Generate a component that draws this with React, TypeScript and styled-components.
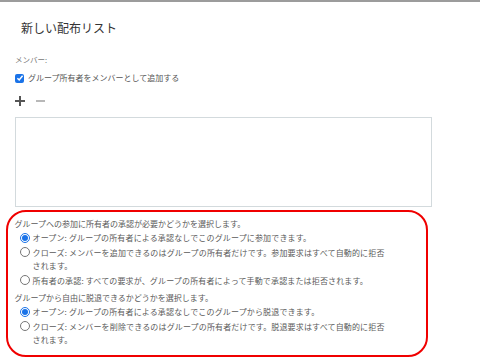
import React from "react";
import styled, { createGlobalStyle } from "styled-components";

const GlobalStyle = createGlobalStyle`
  html, body {
    margin: 0;
    padding: 0;
    background: #ffffff;
  }
  body {
    font-family: "Noto Sans CJK JP", "Noto Sans", sans-serif;
    color: #555;
  }
`;

const Page = styled.div`
  width: 480px;
  height: 363px;
  box-sizing: border-box;
  border-top: 2px solid #9c9c9c;
  padding: 0 6px;
  overflow: hidden;
`;

const Title = styled.h1`
  margin: 18px 0 0 15px;
  font-size: 12px;
  line-height: 16px;
  font-weight: 400;
  color: #333;
`;

const Body = styled.div`
  padding-left: 9px;
`;

const FieldLabel = styled.div`
  margin-top: 19px;
  font-size: 7.5px;
  line-height: 10px;
  color: #777;
`;

const CheckRow = styled.label`
  margin-top: 8px;
  display: flex;
  align-items: center;
  gap: 4px;
  font-size: 8px;
  line-height: 10px;
  color: #555;
`;

const CheckBox = styled.span`
  width: 9px;
  height: 9px;
  border-radius: 2px;
  background: #1a73e8;
  display: flex;
  align-items: center;
  justify-content: center;
`;

const Tools = styled.div`
  margin-top: 13px;
  display: flex;
  align-items: center;
  gap: 11px;
  height: 10px;
`;

const ToolButton = styled.span<{ $muted?: boolean }>`
  display: flex;
  color: ${(p) => (p.$muted ? "#b0b0b0" : "#555")};
`;

const MemberBox = styled.div`
  margin-top: 11px;
  width: 417px;
  height: 90px;
  box-sizing: border-box;
  border: 1px solid #d3dadd;
  background: #fff;
`;

const Panel = styled.section`
  margin-top: 3px;
  width: 422px;
  height: 147px;
  box-sizing: border-box;
  border: 2.5px solid #f00000;
  border-radius: 20px;
  padding: 5px 0 0 6.5px;
`;

const Question = styled.div<{ $first?: boolean }>`
  margin-top: ${(p) => (p.$first ? "0" : "4px")};
  margin-bottom: 1px;
  font-size: 8px;
  line-height: 13px;
  color: #5a5a5a;
`;

const Option = styled.label`
  margin-top: 1px;
  display: flex;
  align-items: flex-start;
  gap: 3px;
  padding-left: 5px;
  width: 371px;
  font-size: 8px;
  line-height: 13.5px;
  letter-spacing: 0.15px;
  color: #5a5a5a;
`;

const Radio = styled.span<{ $checked?: boolean }>`
  flex: none;
  margin-top: 1.5px;
  width: 10px;
  height: 10px;
  box-sizing: border-box;
  border-radius: 50%;
  border: 1px solid ${(p) => (p.$checked ? "#1a73e8" : "#767676")};
  display: flex;
  align-items: center;
  justify-content: center;
  &::after {
    content: "";
    width: 6px;
    height: 6px;
    border-radius: 50%;
    background: ${(p) => (p.$checked ? "#1a73e8" : "transparent")};
  }
`;

const groups = [
  {
    question: "グループへの参加に所有者の承認が必要かどうかを選択します。",
    options: [
      "オープン: グループの所有者による承認なしでこのグループに参加できます。",
      "クローズ: メンバーを追加できるのはグループの所有者だけです。参加要求はすべて自動的に拒否されます。",
      "所有者の承認: すべての要求が、グループの所有者によって手動で承認または拒否されます。",
    ],
  },
  {
    question: "グループから自由に脱退できるかどうかを選択します。",
    options: [
      "オープン: グループの所有者による承認なしでこのグループから脱退できます。",
      "クローズ: メンバーを削除できるのはグループの所有者だけです。脱退要求はすべて自動的に拒否されます。",
    ],
  },
];

export default function App() {
  return (
    <>
      <GlobalStyle />
      <Page>
        <Title>新しい配布リスト</Title>
        <Body>
          <FieldLabel>メンバー:</FieldLabel>
          <CheckRow>
            <CheckBox>
              <svg width="8" height="8" viewBox="0 0 8 8">
                <path d="M1.4 4.2 L3.2 6 L6.6 1.8" fill="none" stroke="#fff" strokeWidth="1.5" />
              </svg>
            </CheckBox>
            グループ所有者をメンバーとして追加する
          </CheckRow>
          <Tools>
            <ToolButton>
              <svg width="10" height="10" viewBox="0 0 10 10">
                <path d="M5 0 V10 M0 5 H10" stroke="currentColor" strokeWidth="2" />
              </svg>
            </ToolButton>
            <ToolButton $muted>
              <svg width="9" height="10" viewBox="0 0 9 10">
                <path d="M0 5 H9" stroke="currentColor" strokeWidth="1.8" />
              </svg>
            </ToolButton>
          </Tools>
          <MemberBox />
        </Body>
        <Panel>
          {groups.map((g, gi) => (
            <div key={gi}>
              <Question $first={gi === 0}>{g.question}</Question>
              {g.options.map((o, oi) => (
                <Option key={oi}>
                  <Radio $checked={oi === 0} />
                  <span>{o}</span>
                </Option>
              ))}
            </div>
          ))}
        </Panel>
      </Page>
    </>
  );
}
